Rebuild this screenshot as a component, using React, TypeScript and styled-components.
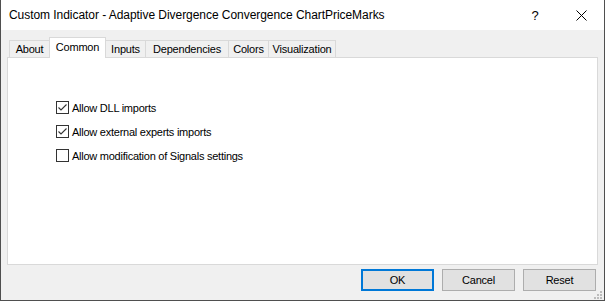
import React from "react";
import styled, { createGlobalStyle } from "styled-components";

const GlobalStyle = createGlobalStyle`
  html, body { margin: 0; padding: 0; background: #ffffff; }
  body { font-family: "Liberation Sans", Arial, sans-serif; font-size: 11px; color: #000; }
  * { box-sizing: border-box; }
`;

const Window = styled.div`
  width: 605px;
  height: 301px;
  display: flex;
  flex-direction: column;
  background: #f0f0f0;
  border-left: 1px solid #4f4f4f;
  border-right: 1px solid #4f4f4f;
  border-bottom: 1px solid #4f4f4f;
  position: relative;
`;

const TitleBar = styled.div`
  height: 30px;
  flex: none;
  display: flex;
  align-items: center;
  background: #ffffff;
  padding-left: 8px;
`;

const Title = styled.div`
  flex: 1;
  font-size: 12px;
  letter-spacing: -0.05px;
  color: #000;
  white-space: nowrap;
`;

const CaptionButton = styled.div`
  width: 46px;
  height: 30px;
  display: flex;
  align-items: center;
  justify-content: center;
  color: #000;
  font-size: 13px;
`;

const Content = styled.div`
  flex: 1;
  display: flex;
  flex-direction: column;
  padding: 7px 6px 0 6px;
`;

const TabStrip = styled.div`
  height: 20px;
  flex: none;
  display: flex;
  align-items: flex-end;
  padding-left: 2px;
  position: relative;
  z-index: 1;
`;

const Tab = styled.div<{ $w: number; $active?: boolean }>`
  width: ${(p) => p.$w}px;
  height: ${(p) => (p.$active ? 21 : 17)}px;
  margin-bottom: ${(p) => (p.$active ? -1 : 0)}px;
  margin-left: -1px;
  &:first-child { margin-left: 0; }
  display: flex;
  align-items: center;
  justify-content: center;
  padding-bottom: ${(p) => (p.$active ? 3 : 0)}px;
  background: ${(p) => (p.$active ? "#ffffff" : "#f0f0f0")};
  border: 1px solid #d9d9d9;
  border-bottom: none;
  position: relative;
  z-index: ${(p) => (p.$active ? 2 : 1)};
  font-size: 11px;
  letter-spacing: -0.2px;
  white-space: nowrap;
`;

const Panel = styled.div`
  flex: 1;
  background: #ffffff;
  border: 1px solid #d9d9d9;
  padding: 43px 0 0 48px;
  display: flex;
  flex-direction: column;
  gap: 11px;
`;

const CheckRow = styled.label`
  display: flex;
  align-items: center;
  height: 13px;
  gap: 3px;
  font-size: 11px;
  letter-spacing: -0.25px;
  white-space: nowrap;
`;

const Box = styled.span`
  width: 13px;
  height: 13px;
  flex: none;
  border: 1px solid #333333;
  background: #ffffff;
  display: flex;
  align-items: center;
  justify-content: center;
`;

const Footer = styled.div`
  height: 35px;
  flex: none;
  display: flex;
  justify-content: flex-end;
  align-items: flex-start;
  gap: 8px;
  padding: 4px 8px 0 0;
  position: relative;
`;

const Button = styled.div<{ $default?: boolean }>`
  width: 73px;
  height: 22px;
  display: flex;
  align-items: center;
  justify-content: center;
  background: #e1e1e1;
  border: ${(p) => (p.$default ? "2px solid #0078d7" : "1px solid #adadad")};
  font-size: 11px;
  letter-spacing: -0.2px;
  color: #000;
`;

const Grip = styled.svg`
  position: absolute;
  right: 2px;
  bottom: 1px;
`;

function Check({ checked }: { checked: boolean }) {
  return (
    <Box>
      {checked && (
        <svg width="11" height="11" viewBox="0 0 11 11">
          <polyline points="1.5,5.5 4,8 9.5,2.5" fill="none" stroke="#333333" strokeWidth="1.1" />
        </svg>
      )}
    </Box>
  );
}

const tabs: { label: string; w: number; active?: boolean }[] = [
  { label: "About", w: 41 },
  { label: "Common", w: 57, active: true },
  { label: "Inputs", w: 41 },
  { label: "Dependencies", w: 84 },
  { label: "Colors", w: 41 },
  { label: "Visualization", w: 68 },
];

const options = [
  { label: "Allow DLL imports", checked: true },
  { label: "Allow external experts imports", checked: true },
  { label: "Allow modification of Signals settings", checked: false },
];

export default function App() {
  return (
    <>
      <GlobalStyle />
      <Window>
        <TitleBar>
          <Title>Custom Indicator - Adaptive Divergence Convergence ChartPriceMarks</Title>
          <CaptionButton>?</CaptionButton>
          <CaptionButton>
            <svg width="11" height="11" viewBox="0 0 11 11">
              <path d="M0.5 0.5 L10.5 10.5 M10.5 0.5 L0.5 10.5" stroke="#000" strokeWidth="1" fill="none" />
            </svg>
          </CaptionButton>
        </TitleBar>
        <Content>
          <TabStrip>
            {tabs.map((t) => (
              <Tab key={t.label} $w={t.w} $active={t.active}>
                {t.label}
              </Tab>
            ))}
          </TabStrip>
          <Panel>
            {options.map((o) => (
              <CheckRow key={o.label}>
                <Check checked={o.checked} />
                {o.label}
              </CheckRow>
            ))}
          </Panel>
        </Content>
        <Footer>
          <Button $default>OK</Button>
          <Button>Cancel</Button>
          <Button>Reset</Button>
          <Grip width="10" height="8" viewBox="0 0 10 8">
            {[
              [8, 0],
              [5, 3],
              [8, 3],
              [2, 6],
              [5, 6],
              [8, 6],
            ].map(([x, y]) => (
              <rect key={`${x}-${y}`} x={x} y={y} width="2" height="2" fill="#bcbcbc" />
            ))}
          </Grip>
        </Footer>
      </Window>
    </>
  );
}
